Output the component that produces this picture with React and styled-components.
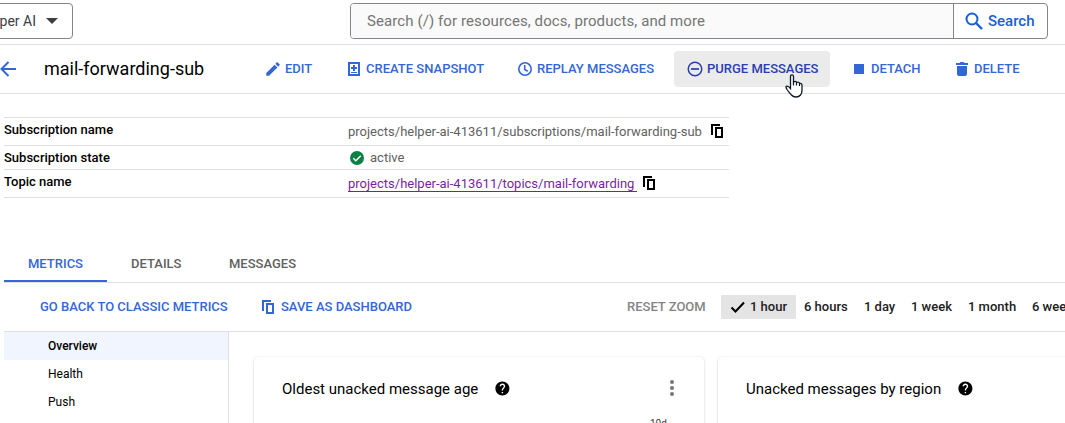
import React from "react";
import styled, { createGlobalStyle, css } from "styled-components";

const Global = createGlobalStyle`
  * { box-sizing: border-box; }
  html, body { margin: 0; padding: 0; overflow: hidden; background: #fff; }
  body { font-family: Roboto, "Liberation Sans", sans-serif; font-size: 13px; color: #000; }
  svg { display: block; flex: none; }
`;

const Page = styled.div`
  position: relative;
  width: 1065px;
  height: 423px;
  overflow: hidden;
`;

const TopBar = styled.header`
  display: flex;
  align-items: flex-start;
  height: 45px;
  padding-top: 3px;
  border-bottom: 1px solid #dfdfdf;
`;

const ProjectPicker = styled.div`
  display: flex;
  align-items: center;
  justify-content: flex-end;
  width: 83px;
  height: 36px;
  margin-left: -10px;
  padding-right: 14px;
  gap: 10px;
  border: 1px solid #80868b;
  border-radius: 4px;
  font-size: 14px;
  color: #3c4043;
  white-space: nowrap;
`;

const SearchBox = styled.div`
  display: flex;
  width: 698px;
  height: 36px;
  margin-left: 277px;
  border: 1px solid #80868b;
  border-radius: 4px;
  overflow: hidden;
`;

const SearchField = styled.div`
  width: 603px;
  padding-left: 16px;
  line-height: 34px;
  font-size: 15px;
  letter-spacing: 0.09px;
  color: #757575;
  background: #fafafa;
  border-right: 1px solid #80868b;
`;

const SearchButton = styled.div`
  display: flex;
  align-items: center;
  padding-left: 11px;
  gap: 5px;
  font-size: 15px;
  font-weight: 500;
  color: #1a5fd0;
`;

const ActionBar = styled.div`
  display: flex;
  align-items: center;
  height: 49px;
  border-bottom: 1px solid #dfdfdf;
`;

const BackSlot = styled.div`
  width: 44px;
  color: #3367d6;
  padding-bottom: 1px;
`;

const PageTitle = styled.h1`
  width: 208px;
  margin: 0;
  padding-bottom: 1px;
  font-size: 18px;
  font-weight: 400;
  white-space: nowrap;
`;

const Action = styled.button`
  display: flex;
  align-items: center;
  width: ${(p) => p.$width}px;
  height: 36px;
  margin: 0 8px 0 0;
  padding: 0 0 0 12px;
  gap: 3px;
  border: 0;
  border-radius: 4px;
  background: ${(p) => (p.$hover ? "#ebebeb" : "transparent")};
  color: ${(p) => (p.$hover ? "#2a3eb1" : "#3367d6")};
  font: 500 13px Roboto, sans-serif;
  white-space: nowrap;
`;

const Label = styled.span`
  display: block;
  padding-bottom: 1px;
  line-height: 15px;
`;

const Properties = styled.dl`
  width: 725px;
  margin: 23px 0 0 4px;
  border-top: 1px solid #dfdfdf;
`;

const Property = styled.div`
  display: flex;
  height: ${(p) => p.$height}px;
  border-bottom: 1px solid #dfdfdf;
`;

const Term = styled.dt`
  width: 344px;
  padding-top: 4px;
  line-height: 16px;
  font-size: 13px;
  font-weight: 500;
`;

const Value = styled.dd`
  display: flex;
  align-items: center;
  gap: ${(p) => p.$gap || 0}px;
  margin: 0;
  font-size: 13px;
  color: #616161;
  white-space: nowrap;
`;

const CopyButton = styled.span`
  margin-bottom: 1px;
  color: #000;
`;

const TopicLink = styled.a`
  width: 289px;
  margin-top: 2px;
  line-height: 14px;
  border-bottom: 1px solid #7b1fa2;
  color: #7b1fa2;
`;

const Tabs = styled.nav`
  display: flex;
  align-items: flex-end;
  height: 37px;
  margin: 48px 0 0 4px;
  border-bottom: 1px solid #dfdfdf;
`;

const Tab = styled.div`
  height: 36px;
  padding: 0 24px;
  width: ${(p) => p.$width}px;
  line-height: 36px;
  font-size: 13px;
  font-weight: 500;
  color: #616161;
  ${(p) => p.$active && css`
    color: #3367d6;
    box-shadow: inset 0 -2px #3367d6;
  `}
`;

const MetricsBar = styled.div`
  display: flex;
  align-items: center;
  height: 49px;
  margin-left: 4px;
  border-bottom: 1px solid #dfdfdf;
  white-space: nowrap;
`;

const TextAction = styled.div`
  display: flex;
  flex: none;
  align-items: center;
  gap: 6px;
  width: ${(p) => p.$width}px;
  font-size: 13px;
  font-weight: 500;
  color: ${(p) => (p.$muted ? "#858585" : "#3367d6")};

  &:first-child {
    margin-left: 36px;
  }
`;

const Range = styled.div`
  display: flex;
  align-items: center;
  flex: none;
  gap: 3px;
  width: ${(p) => p.$width}px;
  height: 24px;
  padding-left: 8px;
  font-size: 13px;
  font-weight: 500;
  color: #212121;
  border-radius: 1px;
  background: ${(p) => (p.$selected ? "#e4e4e4" : "transparent")};
`;

const Body = styled.div`
  display: flex;
  height: 91px;
  margin-left: 4px;
`;

const Sidebar = styled.aside`
  width: 225px;
  flex: none;
  border-right: 1px solid #dfdfdf;
`;

const SideItem = styled.div`
  height: 28px;
  padding-left: 44px;
  line-height: 28px;
  font-size: 12px;
  font-weight: ${(p) => (p.$active ? 500 : 400)};
  background: ${(p) => (p.$active ? "#f0f5ff" : "transparent")};
`;

const Cards = styled.main`
  display: flex;
  gap: 14px;
  padding: 25px 0 0 25px;
`;

const Card = styled.section`
  width: 450px;
  height: 120px;
  flex: none;
  padding: 0 24px 0 28px;
  border-radius: 4px;
  box-shadow: 0 0 2px rgba(60, 64, 67, 0.12), 0 1px 2px rgba(60, 64, 67, 0.22);
`;

const CardHeader = styled.div`
  display: flex;
  align-items: center;
  height: 62px;
`;

const CardTitle = styled.h2`
  width: ${(p) => p.$width}px;
  margin: 0 16px 0 0;
  padding-top: 1px;
  font-size: 15px;
  font-weight: 400;
  white-space: nowrap;
`;

const MenuSlot = styled.div`
  margin-left: auto;
  color: #757575;
`;

const AxisLabel = styled.div`
  padding-left: 368px;
  margin-top: -2px;
  font-size: 10px;
  line-height: 14px;
  color: #424242;
`;

const Pointer = styled.svg`
  position: absolute;
  left: 785px;
  top: 74px;
`;

const Icon = ({ size = 18, children }) => (
  <svg width={size} height={size} viewBox="0 0 24 24" fill="currentColor">{children}</svg>
);

const CopyIcon = () => (
  <svg width="14" height="14" viewBox="0 0 14 14" fill="none" stroke="currentColor" strokeWidth="2">
    <path d="M2 11V1H10M6 4H12V13H6Z" />
  </svg>
);

const HelpIcon = () => (
  <Icon size={16.8}>
    <path d="M12 2C6.48 2 2 6.48 2 12s4.480 10 10 10 10-4.480 10-10S17.520 2 12 2zm1 17h-2v-2h2v2zm2.070-7.750l-.9.920C13.450 12.900 13 13.500 13 15h-2v-.5c0-1.100.45-2.100 1.170-2.830l1.240-1.260c.37-.36.59-.86.59-1.410 0-1.100-.9-2-2-2s-2 .9-2 2H8c0-2.210 1.790-4 4-4s4 1.790 4 4c0 .88-.36 1.680-.93 2.250z" />
  </Icon>
);

export default function App() {
  return (
    <Page>
      <Global />
      <TopBar>
        <ProjectPicker>
          per AI
          <svg width="12" height="6" viewBox="0 0 12 6" fill="currentColor"><path d="M0 0h12L6 6z" /></svg>
        </ProjectPicker>
        <SearchBox>
          <SearchField>Search (/) for resources, docs, products, and more</SearchField>
          <SearchButton>
            <svg width="18" height="18" viewBox="0 0 18 18" fill="none" stroke="currentColor" strokeWidth="2">
              <circle cx="7" cy="7" r="5.500" /><path d="M11 11l6 6" strokeWidth="2.400" />
            </svg>
            Search
          </SearchButton>
        </SearchBox>
      </TopBar>

      <ActionBar>
        <BackSlot>
          <svg width="17" height="16" viewBox="0 0 17 16" fill="none" stroke="currentColor" strokeWidth="2">
            <path d="M16 8H2M8.500 1L1.500 8l7 7" />
          </svg>
        </BackSlot>
        <PageTitle>mail-forwarding-sub</PageTitle>
        <Action $width={75}>
          <Icon><path d="M3 17.250V21h3.750L17.810 9.940l-3.750-3.750L3 17.250zM20.710 7.040a1 1 0 0 0 0-1.410l-2.340-2.340a1 1 0 0 0-1.410 0l-1.830 1.830 3.750 3.750 1.830-1.830z" /></Icon>
          <Label>EDIT</Label>
        </Action>
        <Action $width={162}>
          <svg width="16" height="18" viewBox="0 0 16 18">
            <path fill="currentColor" fillRule="evenodd" d="M1 2h12v14H1zM3 4v10h8V4z" />
            <path fill="currentColor" d="M6 5h2v2h2v2H8v2H6V9H4V7h2zM4 12h6v1H4z" />
          </svg>
          <Label>CREATE SNAPSHOT</Label>
        </Action>
        <Action $width={161}>
          <svg width="17" height="18" viewBox="0 0 17 18" fill="none" stroke="currentColor" strokeWidth="1.600">
            <circle cx="8" cy="9" r="6.200" /><path d="M7.700 5v4.500l3 1.800" />
          </svg>
          <Label>REPLAY MESSAGES</Label>
        </Action>
        <Action $width={156} $hover>
          <svg width="18" height="18" viewBox="0 0 18 18" fill="none" stroke="currentColor" strokeWidth="1.500">
            <circle cx="9" cy="9" r="6.750" /><path d="M5 9h8" strokeWidth="1.700" />
          </svg>
          <Label>PURGE MESSAGES</Label>
        </Action>
        <Action $width={95}>
          <svg width="18" height="18" viewBox="0 0 18 18"><path d="M4 4h10v10H4z" fill="currentColor" /></svg>
          <Label>DETACH</Label>
        </Action>
        <Action $width={92}>
          <svg width="18" height="18" viewBox="0 0 18 18" fill="currentColor">
            <path d="M3 3h3.500l1-1h3l1 1H15v2H3zM4 6h10v8q0 2-2 2H6q-2 0-2-2z" />
          </svg>
          <Label>DELETE</Label>
        </Action>
      </ActionBar>

      <Properties>
        <Property $height={28}>
          <Term>Subscription name</Term>
          <Value $gap={8}>
            projects/helper-ai-413611/subscriptions/mail-forwarding-sub
            <CopyButton><CopyIcon /></CopyButton>
          </Value>
        </Property>
        <Property $height={24}>
          <Term>Subscription state</Term>
          <Value>
            <svg width="22" height="16" viewBox="0 0 22 16">
              <circle cx="9" cy="8" r="7" fill="#0b8043" />
              <path d="M5.300 8.200l2.500 2.500 5-5" fill="none" stroke="#fff" strokeWidth="1.500" />
            </svg>
            active
          </Value>
        </Property>
        <Property $height={28}>
          <Term>Topic name</Term>
          <Value $gap={5}>
            <TopicLink>projects/helper-ai-413611/topics/mail-forwarding</TopicLink>
            <CopyButton><CopyIcon /></CopyButton>
          </Value>
        </Property>
      </Properties>

      <Tabs>
        <Tab $width={103} $active>METRICS</Tab>
        <Tab $width={98}>DETAILS</Tab>
        <Tab $width={115}>MESSAGES</Tab>
      </Tabs>

      <MetricsBar>
        <TextAction $width={221}><Label>GO BACK TO CLASSIC METRICS</Label></TextAction>
        <TextAction $width={366}><CopyIcon /><Label>SAVE AS DASHBOARD</Label></TextAction>
        <TextAction $width={94} $muted><Label>RESET ZOOM</Label></TextAction>
        <Range $width={75} $selected>
          <svg width="18" height="16" viewBox="0 0 18 16" fill="none" stroke="#000" strokeWidth="2">
            <path d="M2.500 8.500l4 4 8.500-9" />
          </svg>
          <Label>1 hour</Label>
        </Range>
        <Range $width={60}><Label>6 hours</Label></Range>
        <Range $width={47}><Label>1 day</Label></Range>
        <Range $width={57}><Label>1 week</Label></Range>
        <Range $width={64}><Label>1 month</Label></Range>
        <Range $width={64}><Label>6 weeks</Label></Range>
      </MetricsBar>

      <Body>
        <Sidebar>
          <SideItem $active>Overview</SideItem>
          <SideItem>Health</SideItem>
          <SideItem>Push</SideItem>
        </Sidebar>
        <Cards>
          <Card>
            <CardHeader>
              <CardTitle $width={196}>Oldest unacked message age</CardTitle>
              <HelpIcon />
              <MenuSlot>
                <svg width="16" height="16" viewBox="0 0 16 16" fill="currentColor">
                  <circle cx="8" cy="2" r="2" /><circle cx="8" cy="8" r="2" /><circle cx="8" cy="14" r="2" />
                </svg>
              </MenuSlot>
            </CardHeader>
            <AxisLabel>10d</AxisLabel>
          </Card>
          <Card>
            <CardHeader>
              <CardTitle $width={195}>Unacked messages by region</CardTitle>
              <HelpIcon />
            </CardHeader>
          </Card>
        </Cards>
      </Body>

      <Pointer width="18" height="24" viewBox="0 0 18 24">
        <path
          d="M5.500 14V2.500Q5.500 .8 7 .8T8.500 2.500V8Q11 6.500 11.500 8.500 14 7.500 14.500 9.500 17 8.800 17 11.500V16.500Q17 19 15.500 21 14 23 11 23 8 23 6.500 21 4 18.500 2 15.500.2 12.500 1.700 12.200 3.500 12 5.500 14.500Z"
          fill="#fff" stroke="#111827" strokeWidth="1.300"
        />
        <path d="M8.500 7.500v4M11.500 8.500v3M14.500 9.500v2.500" stroke="#111827" strokeWidth="1.200" />
      </Pointer>
    </Page>
  );
}
